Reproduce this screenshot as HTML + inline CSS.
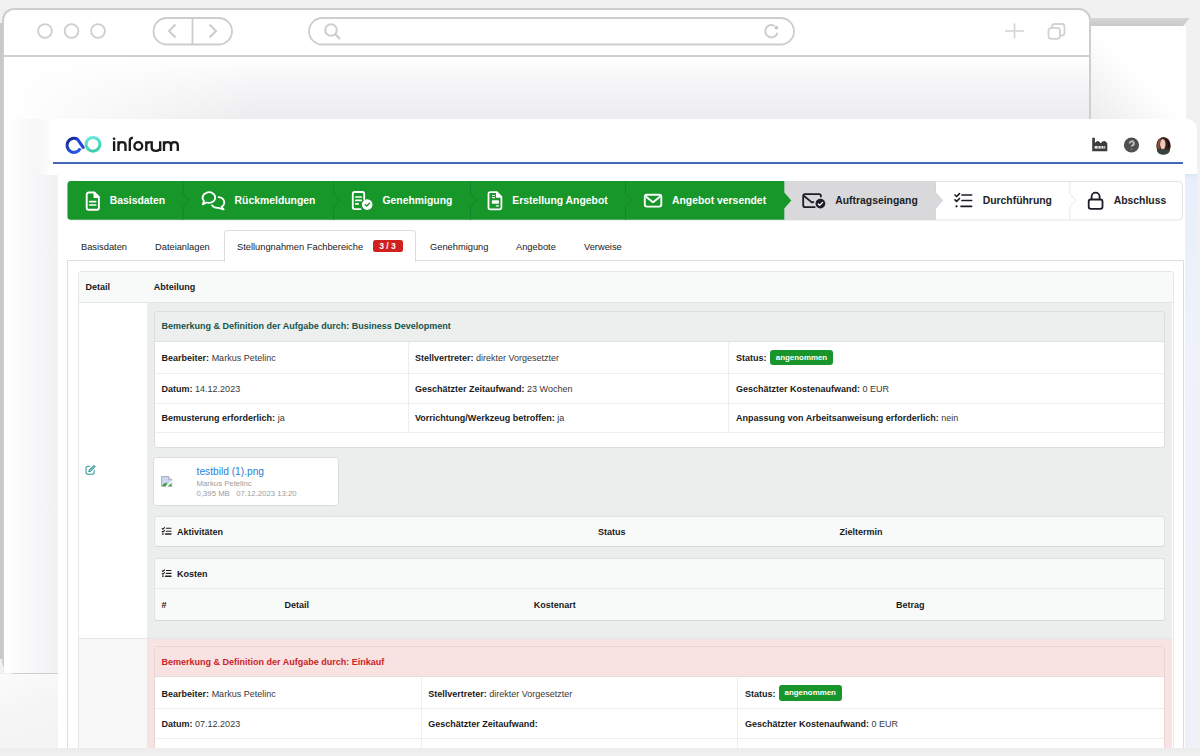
<!DOCTYPE html>
<html><head><meta charset="utf-8">
<style>
*{box-sizing:border-box;margin:0;padding:0}
html,body{width:1200px;height:756px;overflow:hidden;background:#f1f1f1;font-family:"Liberation Sans",sans-serif;color:#222}
.abs{position:absolute}
#browser{left:2px;top:7.7px;width:1089px;height:666.3px;border:2px solid #cecece;border-radius:12px 12px 13px 13px;background:#fff}
#tb-line{left:2px;top:55px;width:1089px;height:2px;background:#cfcfcf}
#shade{left:4px;top:57px;width:1085px;height:62px;background:linear-gradient(90deg,rgba(255,255,255,1) 0,rgba(255,255,255,0) 260px),linear-gradient(#fff 0,#f6f6f8 40%,#ececee 100%)}
#rwhite{left:1091px;top:26px;width:95px;height:93px;background:linear-gradient(45deg,#ececee 0,#f6f6f7 25%,#fff 50%,#fff 100%)}
#bar2{left:1090px;top:18px;width:100px;height:8px;background:linear-gradient(#d6d6d6,#c9c9c9);clip-path:polygon(0 0,100% 0,93% 100%,0 100%)}
#app{left:58px;top:119px;width:1127px;height:629px;background:#fff}
#apphead{left:37px;top:119px;width:1160px;height:56px;background:linear-gradient(90deg,rgba(255,255,255,0) 0,#fff 14px);border-radius:0 10px 0 0}
#lshade{left:4px;top:119px;width:54px;height:554px;background:linear-gradient(90deg,#fff 0,#fbfbfc 30%,#f5f5f7 70%,#f1f1f3 100%)}
#blue{left:53px;top:162px;width:1130px;height:2px;background:#4566b4}
#bottom{left:0;top:747.5px;width:1200px;height:9px;background:linear-gradient(#ececec,#f2f2f2)}
#rshade{left:1185px;top:174px;width:12px;height:574px;background:linear-gradient(#dbe6f6 0,#e8eefa 4px,#eef2fb 30%,#eef1f8 100%)}


.st{position:absolute;top:195.9px;font-size:10.4px;line-height:10.4px;font-weight:700;white-space:nowrap}
.t{position:absolute;line-height:1;white-space:nowrap;color:#383838;margin-top:0.4px}
.t b,.b{font-weight:700;color:#1a1a1a}
.badge{position:absolute;background:#18952b;border-radius:3px;color:#fff;font-size:7.9px;font-weight:700;text-align:center;line-height:15.5px}
/* tabs */
.tab{position:absolute;top:241.5px;font-size:9.3px;color:#1a1a1a;white-space:nowrap}
#acttab{left:224px;top:230px;width:192px;height:32px;border:1px solid #ddd;border-bottom:none;border-radius:4px 4px 0 0;background:#fff}
#content{left:67px;top:260px;width:1117px;height:490px;border:1px solid #ddd;border-bottom:none;background:#fff}
</style></head><body>
<div class="abs" style="left:0;top:674px;width:58px;height:82px;background:linear-gradient(160deg,#fbfbfb 0,#f5f5f5 45%,#f3f3f3 100%)"></div>
<div id="browser" class="abs"></div>
<div id="tb-line" class="abs"></div>
<div class="abs" style="left:0;top:23px;width:3px;height:636px;background:#c9c9c9"></div>
<div id="shade" class="abs"></div>
<svg class="abs" style="left:0;top:0" width="1200" height="60" viewBox="0 0 1200 60">
 <g fill="none" stroke="#cdcdcd" stroke-width="1.8">
  <circle cx="45" cy="31" r="6.9"/>
  <circle cx="71.5" cy="31" r="6.9"/>
  <circle cx="98" cy="31" r="6.9"/>
  <rect x="153.5" y="18" width="78.5" height="26.5" rx="13.25"/>
  <line x1="192.5" y1="18" x2="192.5" y2="44.5"/>
  <polyline points="175.5,24.5 169,31 175.5,37.5" stroke-width="2"/>
  <polyline points="209.5,24.5 216,31 209.5,37.5" stroke-width="2"/>
  <rect x="309" y="18" width="485" height="26.5" rx="13.25"/>
  <circle cx="331" cy="30" r="5.8" stroke-width="2"/>
  <line x1="335.2" y1="34.2" x2="340" y2="39" stroke-width="2.2"/>
  <path d="M777.4 32.8 A6.2 6.2 0 1 1 774.5 25.8" stroke-width="2"/>
  <circle cx="776.4" cy="27.6" r="1.9" fill="#c8c8c8" stroke="none"/>
  <line x1="1014.5" y1="23.5" x2="1014.5" y2="38.5" stroke-width="1.8" stroke="#d6d6d6"/>
  <line x1="1005" y1="31" x2="1024" y2="31" stroke-width="1.8" stroke="#dadada"/>
  <rect x="1048.5" y="27.8" width="11.5" height="11" rx="3" stroke-width="1.8" stroke="#d2d2d2"/>
  <path d="M1052 27.8 V26.5 a2.5 2.5 0 0 1 2.5 -2.5 H1062 a2.5 2.5 0 0 1 2.5 2.5 V33 a2.5 2.5 0 0 1 -2.5 2.5 H1060" stroke-width="1.8" stroke="#d2d2d2"/>
 </g>
</svg>

<div id="rwhite" class="abs"></div>
<div id="bar2" class="abs"></div>
<div id="lshade" class="abs"></div>
<div id="app" class="abs"></div>
<div id="apphead" class="abs"></div>
<div id="blue" class="abs"></div>
<div id="rshade" class="abs"></div>



<svg class="abs" style="left:0;top:0" width="1200" height="230" viewBox="0 0 1200 230">
 <defs>
  <linearGradient id="lg1" x1="0" y1="0" x2="0.6" y2="1"><stop offset="0" stop-color="#18208a"/><stop offset="1" stop-color="#2458e8"/></linearGradient>
  <linearGradient id="lg2" x1="0" y1="0" x2="0.3" y2="1"><stop offset="0" stop-color="#6ee8e0"/><stop offset="1" stop-color="#38cfae"/></linearGradient>
 </defs>
 <!-- logo -->
 <circle cx="93" cy="144.3" r="6.9" fill="none" stroke="url(#lg2)" stroke-width="3"/>
 <path d="M77.6 139.3 A7 7 0 1 0 80.3 148.4" fill="none" stroke="url(#lg1)" stroke-width="3.1"/>
 <path d="M77.6 139.3 L83.2 147.4" fill="none" stroke="#2443d8" stroke-width="3" stroke-linecap="round"/>
 <!-- factory -->
 <path d="M1092.2 151.2 V138.3 Q1092.2 137.8 1092.7 137.8 H1094.4 Q1094.9 137.8 1094.9 138.3 V143 Q1096.5 140.8 1098 141 Q1099.6 141.3 1100.6 143.3 Q1102.6 140.8 1104.4 141 Q1106.2 141.2 1107.3 143.5 V151.2 Z" fill="#3c3c3c"/>
 <rect x="1094.6" y="146" width="10.6" height="2.6" fill="#e8e8e8"/>
 <rect x="1097.6" y="146" width="0.9" height="2.6" fill="#555"/><rect x="1100.6" y="146" width="0.9" height="2.6" fill="#555"/><rect x="1103.4" y="146" width="0.9" height="2.6" fill="#555"/>
 <!-- help -->
 <circle cx="1131.5" cy="145" r="7.6" fill="#505050"/>
 <path d="M1129.6 143.4 a2.1 2.1 0 1 1 3 1.9 c-0.6 0.3 -0.9 0.7 -0.9 1.3" fill="none" stroke="#bdbdbd" stroke-width="1.9"/>
 <circle cx="1131.7" cy="149.2" r="0.8" fill="#8a8a8a"/>
 <!-- avatar -->
 <ellipse cx="1163.5" cy="145.8" rx="7.2" ry="8.8" fill="#3a1f19"/>
 <path d="M1157.2 148.5 Q1156.6 140 1161.5 137.4 Q1159 142.5 1159.8 149.5 Z" fill="#9a4a30"/>
 <path d="M1166 138.5 Q1169.8 141 1170 147 L1168.3 148 Q1168 142 1166 138.5Z" fill="#241210"/>
 <ellipse cx="1162.8" cy="144.3" rx="2.7" ry="5.4" fill="#e9c9bf"/>
 <path d="M1156.8 150.2 Q1163 147.8 1170 150.2 Q1169.5 153.5 1165 154.6 H1161.8 Q1157.3 153.5 1156.8 150.2 Z" fill="#38423f"/>
 <!-- stepper -->
 <rect x="67.5" y="181.5" width="1115" height="38.5" rx="3.5" fill="#fff" stroke="#e3e3e3"/>
 <path d="M784 181 H935.5 V192.5 L942.7 200.5 L935.5 208.5 V220 H784 Z" fill="#d9d9db"/>
 <path d="M935.5 181 V192.5 L942.7 200.5 L935.5 208.5 V220" fill="none" stroke="#d6d6d8" stroke-width="1"/>
 <path d="M71 181 H784.3 V192.6 L791.3 200.5 L784.3 208.5 V219.8 H71 A3.5 3.5 0 0 1 67.5 216.3 V184.5 A3.5 3.5 0 0 1 71 181 Z" fill="#17962a"/>
 <g fill="none" stroke="#12832a" stroke-width="1" opacity="0.8">
  <path d="M183.1 181 V193.4 L189.2 200.4 L183.1 206.8 V220"/>
  <path d="M333.5 181 V193.4 L339.6 200.4 L333.5 206.8 V220"/>
  <path d="M470.5 181 V193.4 L476.6 200.4 L470.5 206.8 V220"/>
  <path d="M625.5 181 V193.4 L631.6 200.4 L625.5 206.8 V220"/>
 </g>
 <path d="M1069.8 181.5 V193.4 L1076 200.4 L1069.8 206.8 V219.5" fill="none" stroke="#e6e6e6" stroke-width="1"/>

 <!-- icons -->
 <g fill="none" stroke="#fff" stroke-width="1.9" stroke-linejoin="round" stroke-linecap="round">
  <!-- doc -->
  <path d="M88.6 192.5 H94.4 L98.9 197 V207.8 a1.9 1.9 0 0 1 -1.9 1.9 H88.6 a1.9 1.9 0 0 1 -1.9 -1.9 V194.4 a1.9 1.9 0 0 1 1.9 -1.9Z"/>
  <path d="M94.2 192.7 V197.2 H98.7 Z" fill="#fff" stroke-width="1.4"/>
  <line x1="89.7" y1="201.6" x2="95.7" y2="201.6" stroke-width="1.7"/>
  <line x1="89.7" y1="205" x2="95.7" y2="205" stroke-width="1.7"/>
  <!-- chats -->
  <path d="M204 200.9 A6.3 5.3 0 1 1 206.6 202.5 L202.7 204.4 Z" stroke-width="1.75"/>
  <path d="M218.6 197.2 A6.3 5.3 0 0 1 221.6 206.8 L223.7 209.5 L218.4 207.8 A6.3 5.3 0 0 1 212 205.3" stroke-width="1.75"/>
  <!-- genehmigung doc -->
  <path d="M364.2 199 V193.8 a1.8 1.8 0 0 0 -1.8 -1.8 H354.6 a1.8 1.8 0 0 0 -1.8 1.8 V207.3 a1.8 1.8 0 0 0 1.8 1.8 H360.5" stroke-width="1.85"/>
  <line x1="355.8" y1="197" x2="361.3" y2="197" stroke-width="1.7"/>
  <line x1="355.8" y1="200.4" x2="361.3" y2="200.4" stroke-width="1.7"/>
  <line x1="355.8" y1="203.9" x2="358.2" y2="203.9" stroke-width="1.7"/>
 </g>
 <circle cx="367.2" cy="204.6" r="5.3" fill="#fff"/>
 <path d="M365.2 204.6 L366.7 206 L369.5 203.3" fill="none" stroke="#17962a" stroke-width="1.35" stroke-linecap="round" stroke-linejoin="round"/>
 <!-- invoice -->
 <g fill="none" stroke="#fff" stroke-width="1.8" stroke-linejoin="round">
  <path d="M490.3 192.2 H496.8 L501.4 196.8 V207.5 a1.8 1.8 0 0 1 -1.8 1.8 H490.3 a1.8 1.8 0 0 1 -1.8 -1.8 V194 a1.8 1.8 0 0 1 1.8 -1.8Z"/>
  <path d="M496.6 192.4 V197 H501.2 Z" fill="#fff" stroke-width="1.3"/>
 </g>
 <g fill="#fff">
  <rect x="492" y="194.9" width="3" height="1.2" rx="0.5"/><rect x="492" y="197" width="3" height="1.2" rx="0.5"/>
  <rect x="491.8" y="200.2" width="7.2" height="3.6" rx="0.8"/>
  <rect x="495.8" y="205.2" width="3.2" height="1.2" rx="0.5"/>
 </g>
 <!-- envelope -->
 <g fill="none" stroke="#fff" stroke-width="1.9" stroke-linejoin="round">
  <rect x="644.8" y="194.8" width="16.5" height="11.8" rx="2"/>
  <path d="M645.8 196.4 L652.3 201.7 Q653 202.3 653.7 201.7 L660.2 196.4"/>
 </g>
 <!-- envelope check -->
 <g fill="none" stroke="#1d1d27" stroke-width="1.8" stroke-linejoin="round" stroke-linecap="round">
  <path d="M814.8 207.1 H805.1 a1.9 1.9 0 0 1 -1.9 -1.9 V196 a1.9 1.9 0 0 1 1.9 -1.9 H819 a1.9 1.9 0 0 1 1.9 1.9 V196.6"/>
  <path d="M804.4 196.2 L811.2 201.9 Q812.2 202.6 813.3 201.9"/>
 </g>
 <circle cx="820.4" cy="203.6" r="5.6" fill="#d9d9db"/>
 <circle cx="820.4" cy="203.6" r="4.9" fill="#1d1d27"/>
 <path d="M818.2 203.9 L819.7 205.3 L822.6 202.4" fill="none" stroke="#fff" stroke-width="1.3" stroke-linecap="round" stroke-linejoin="round"/>
 <!-- checklist -->
 <g fill="none" stroke="#1d1d27" stroke-width="1.7" stroke-linecap="round" stroke-linejoin="round">
  <path d="M955 195 L956.6 196.5 L959.5 193.6"/>
  <path d="M955 199.9 L956.6 201.4 L959.5 198.5"/>
  <line x1="962" y1="195" x2="971.6" y2="195"/>
  <line x1="962" y1="200.5" x2="971.6" y2="200.5"/>
  <line x1="961" y1="206.3" x2="971.6" y2="206.3"/>
 </g>
 <circle cx="956.5" cy="206.3" r="1.15" fill="#1d1d27"/>
 <!-- lock -->
 <g fill="none" stroke="#1d1d27" stroke-width="1.8">
  <rect x="1088.7" y="199.5" width="13.8" height="9.3" rx="2"/>
  <path d="M1091.6 199.5 V196.6 a4 4 0 0 1 8 0 V199.5"/>
 </g>
</svg>
<svg class="abs" style="left:0;top:0" width="200" height="160" viewBox="0 0 200 160">
 <circle cx="114.1" cy="138.7" r="1.3" fill="#1b1b1b"/>
 <g fill="none" stroke="#1b1b1b" stroke-width="2.35" stroke-linejoin="round">
  <path d="M114.1 141.2 V151"/>
  <path d="M118.5 151 V141.2 M118.5 145.2 C118.5 143.1 120.2 142.1 122 142.1 C123.8 142.1 125.5 143.1 125.5 145.4 V151"/>
  <path d="M129.8 151 V141 C129.8 139 131 137.8 132.9 137.6"/>
  <circle cx="138.3" cy="146" r="3.9"/>
  <path d="M146.3 151 V141.2 M146.3 145.6 C146.3 143.3 148 142.1 150.8 142.1"/>
  <path d="M151.7 141.2 V147.8 C151.7 149.8 153.7 150.9 156 150.9 C158.3 150.9 160.2 149.8 160.2 147.6 M160.2 141.2 V151"/>
  <path d="M164 151 V141.2 M164 145.2 C164 143.1 165.6 142.1 167.5 142.1 C169.4 142.1 171 143.1 171 145.2 V151 M171 145.2 C171 143.1 172.6 142.1 174.4 142.1 C176.2 142.1 177.8 143.1 177.8 145.2 V151"/>
 </g>
</svg>

<div id="content" class="abs"></div>
<div id="acttab" class="abs"></div>
<div class="tab" style="left:81px">Basisdaten</div>
<div class="tab" style="left:155px">Dateianlagen</div>
<div class="tab" style="left:237px">Stellungnahmen Fachbereiche</div>
<div class="abs" style="left:372.5px;top:239.7px;width:30px;height:12.8px;background:#d0201f;border-radius:2.5px;color:#fff;font-size:8.6px;font-weight:700;text-align:center;line-height:12.8px">3 / 3</div>
<div class="tab" style="left:430px">Genehmigung</div>
<div class="tab" style="left:516px">Angebote</div>
<div class="tab" style="left:584px">Verweise</div>


<div class="st" style="left:109.7px;color:#fff">Basisdaten</div>
<div class="st" style="left:234.6px;color:#fff">Rückmeldungen</div>
<div class="st" style="left:382.5px;color:#fff">Genehmigung</div>
<div class="st" style="left:512.3px;color:#fff">Erstellung Angebot</div>
<div class="st" style="left:672px;color:#fff">Angebot versendet</div>
<div class="st" style="left:835.2px;color:#1e1e26">Auftragseingang</div>
<div class="st" style="left:982.7px;color:#1e1e26">Durchführung</div>
<div class="st" style="left:1113.7px;color:#1e1e26">Abschluss</div>

<div class="abs" style="left:77.5px;top:271px;width:1096px;height:480px;border:1px solid #e6e7e8;border-radius:3px;background:#fff"></div>
<div class="abs" style="left:78.5px;top:272px;width:1094px;height:30.6px;background:#f8f9f9;border-radius:2px 2px 0 0;border-bottom:1px solid #e4e6e8"></div>
<div class="abs" style="left:146.8px;top:302.6px;width:1025.7px;height:335.4px;background:#eceeee"></div>
<div class="abs" style="left:78.5px;top:637.5px;width:1094px;height:1px;background:#e4e6e8"></div>
<div class="abs" style="left:78.5px;top:638.5px;width:68.3px;height:112px;background:#f8f8f8"></div>
<div class="abs" style="left:146.8px;top:638.5px;width:1025.7px;height:112px;background:#f8e2e2"></div>
<!-- card1 -->
<div class="abs" style="left:153.6px;top:311px;width:1011.6px;height:137px;border:1px solid #dcdfe1;border-radius:3px;background:#fff"></div>
<div class="abs" style="left:154.6px;top:312px;width:1009.6px;height:29.5px;background:#edefef;border-bottom:1px solid #dfe1e3;border-radius:2px 2px 0 0"></div>
<div class="abs" style="left:154.6px;top:373px;width:1009.6px;height:1px;background:#eceef0"></div>
<div class="abs" style="left:154.6px;top:402.5px;width:1009.6px;height:1px;background:#eceef0"></div>
<div class="abs" style="left:154.6px;top:431.5px;width:1009.6px;height:1px;background:#eceef0"></div>
<div class="abs" style="left:407.5px;top:342px;width:1px;height:90px;background:#eceef0"></div>
<div class="abs" style="left:728px;top:342px;width:1px;height:90px;background:#eceef0"></div>
<!-- attachment -->
<div class="abs" style="left:152.5px;top:456.7px;width:186px;height:49.3px;border:1px solid #d9dcde;border-radius:3.5px;background:#fff"></div>
<!-- aktivitaeten -->
<div class="abs" style="left:153.6px;top:515.7px;width:1011.6px;height:31.8px;border:1px solid #e0e2e3;border-bottom-color:#d6d8d9;border-radius:3px;background:#f8f9f9"></div>
<!-- kosten -->
<div class="abs" style="left:153.6px;top:558px;width:1011.6px;height:63px;border:1px solid #e0e2e3;border-bottom-color:#d6d8d9;border-radius:3px;background:#f8f9f9"></div>
<div class="abs" style="left:154.6px;top:588px;width:1009.6px;height:1px;background:#e6e8ea"></div>
<!-- card2 -->
<div class="abs" style="left:153.75px;top:646px;width:1011.5px;height:110px;border:1px solid #e6d6d6;border-radius:3px;background:#fff"></div>
<div class="abs" style="left:154.75px;top:647px;width:1009.5px;height:30px;background:#f8e2e2;border-bottom:1px solid #e8dcdc"></div>
<div class="abs" style="left:154.75px;top:708px;width:1009.5px;height:1px;background:#eceef0"></div>
<div class="abs" style="left:154.75px;top:738px;width:1009.5px;height:1px;background:#eceef0"></div>
<div class="abs" style="left:421px;top:678px;width:1px;height:80px;background:#eceef0"></div>
<div class="abs" style="left:737px;top:678px;width:1px;height:80px;background:#eceef0"></div>
<div class="t b" style="left:85.6px;top:282.98px;font-size:9px;">Detail</div>
<div class="t b" style="left:153.7px;top:282.98px;font-size:9px;">Abteilung</div>
<div class="t b" style="left:161.6px;top:321.88px;font-size:9px;color:#16544a">Bemerkung &amp; Definition der Aufgabe durch: Business Development</div>
<div class="t " style="left:161.6px;top:353.68px;font-size:9px;"><b>Bearbeiter:</b> Markus Petelinc</div>
<div class="t " style="left:415px;top:353.68px;font-size:9px;"><b>Stellvertreter:</b> direkter Vorgesetzter</div>
<div class="t " style="left:736px;top:353.68px;font-size:9px;"><b>Status:</b></div>
<div class="t " style="left:161.6px;top:384.18px;font-size:9px;"><b>Datum:</b> 14.12.2023</div>
<div class="t " style="left:415px;top:384.18px;font-size:9px;"><b>Geschätzter Zeitaufwand:</b> 23 Wochen</div>
<div class="t " style="left:736px;top:384.18px;font-size:9px;"><b>Geschätzter Kostenaufwand:</b> 0 EUR</div>
<div class="t " style="left:161.6px;top:413.58px;font-size:9px;"><b>Bemusterung erforderlich:</b> ja</div>
<div class="t " style="left:415px;top:413.58px;font-size:9px;"><b>Vorrichtung/Werkzeug betroffen:</b> ja</div>
<div class="t " style="left:736px;top:413.58px;font-size:9px;"><b>Anpassung von Arbeitsanweisung erforderlich:</b> nein</div>
<div class="badge" style="left:770px;top:349.5px;width:63px;height:15.5px">angenommen</div>
<div class="t " style="left:196.6px;top:467.07px;font-size:10.2px;color:#2a80d6">testbild (1).png</div>
<div class="t " style="left:196.6px;top:479.87px;font-size:7.75px;color:#9c9c9c">Markus Petelinc</div>
<div class="t " style="left:196.6px;top:489.87px;font-size:7.75px;color:#9c9c9c">0,395 MB&nbsp;&nbsp;&nbsp;07.12.2023 13:20</div>
<div class="t b" style="left:177.1px;top:527.38px;font-size:9px;">Aktivitäten</div>
<div class="t b" style="left:598px;top:527.38px;font-size:9px;">Status</div>
<div class="t b" style="left:839.5px;top:527.38px;font-size:9px;">Zieltermin</div>
<div class="t b" style="left:177.1px;top:569.48px;font-size:9px;">Kosten</div>
<div class="t b" style="left:161.6px;top:600.18px;font-size:9px;">#</div>
<div class="t b" style="left:284.4px;top:600.18px;font-size:9px;">Detail</div>
<div class="t b" style="left:533.75px;top:600.18px;font-size:9px;">Kostenart</div>
<div class="t b" style="left:896px;top:600.18px;font-size:9px;">Betrag</div>
<div class="t b" style="left:161.6px;top:657.88px;font-size:9px;color:#cc2229">Bemerkung &amp; Definition der Aufgabe durch: Einkauf</div>
<div class="t " style="left:161.6px;top:689.13px;font-size:9px;"><b>Bearbeiter:</b> Markus Petelinc</div>
<div class="t " style="left:428.25px;top:689.13px;font-size:9px;"><b>Stellvertreter:</b> direkter Vorgesetzter</div>
<div class="t " style="left:745px;top:689.13px;font-size:9px;"><b>Status:</b></div>
<div class="badge" style="left:779px;top:684.7px;width:62.5px;height:16.3px;line-height:16.8px">angenommen</div>
<div class="t " style="left:161.6px;top:719.13px;font-size:9px;"><b>Datum:</b> 07.12.2023</div>
<div class="t " style="left:428.25px;top:719.13px;font-size:9px;"><b>Geschätzter Zeitaufwand:</b></div>
<div class="t " style="left:745px;top:719.13px;font-size:9px;"><b>Geschätzter Kostenaufwand:</b> 0 EUR</div>

<svg class="abs" style="left:0;top:0" width="1200" height="756" viewBox="0 0 1200 756">
 <g fill="none" stroke="#2f9794" stroke-width="1.05" stroke-linecap="round" stroke-linejoin="round">
  <path d="M89.8 466.3 H88 a2 2 0 0 0 -2 2 V472.2 a2 2 0 0 0 2 2 H92.2 a2 2 0 0 0 2 -2 V470.6"/>
  <path d="M94 465.6 L95 466.6 L90.3 471.3 L88.8 471.7 L89.2 470.2 Z"/>
 </g>
 <!-- broken image -->
 <path d="M161.6 476.5 H168.6 L171.7 479.6 V486.4 H161.6 Z" fill="#c9d8f3" stroke="#a9a9a9" stroke-width="0.9"/>
 <path d="M162.1 486 Q164 482.5 167.5 482.8 L165.8 486 Z" fill="#3fa02a"/>
 <path d="M168.6 484.8 L171.2 484 V486 H168 Z" fill="#3fa02a"/>
 <path d="M166 487.3 L172.5 480.5" stroke="#fff" stroke-width="1.3"/>
 <path d="M168.5 476.5 V479.7 H171.7" fill="#e0e0e0" stroke="#a9a9a9" stroke-width="0.8"/>
 <!-- list icons -->
 <g fill="none" stroke="#222" stroke-width="1.1" stroke-linecap="round">
  <path d="M162.2 528.6 L162.9 529.2 L164.5 527.6"/>
  <path d="M162.2 531.5 L162.9 532.1 L164.5 530.5"/>
  <line x1="166.3" y1="528.3" x2="171" y2="528.3"/><line x1="166.3" y1="531.2" x2="171" y2="531.2"/><line x1="165.5" y1="534" x2="171" y2="534" stroke-width="1.4"/>
  <path d="M162.2 570.8 L162.9 571.4 L164.5 569.8"/>
  <path d="M162.2 573.7 L162.9 574.3 L164.5 572.7"/>
  <line x1="166.3" y1="570.5" x2="171" y2="570.5"/><line x1="166.3" y1="573.4" x2="171" y2="573.4"/><line x1="165.5" y1="576.2" x2="171" y2="576.2" stroke-width="1.4"/>
 </g>
 <rect x="162.2" y="533.2" width="1.5" height="1.6" fill="#333"/><rect x="162.2" y="575.4" width="1.5" height="1.6" fill="#333"/>
</svg>
<div id="bottom" class="abs"></div>
</body></html>
